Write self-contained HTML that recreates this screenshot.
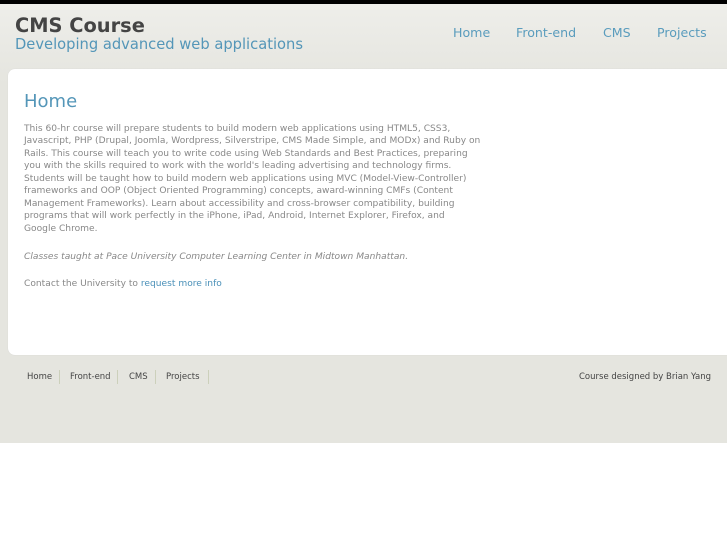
<!DOCTYPE html>
<html><head><meta charset="utf-8"><style>
html,body{margin:0;padding:0;background:#fff;}
body{width:727px;height:545px;position:relative;overflow:hidden;font-family:"DejaVu Sans","Liberation Sans",sans-serif;}
#top{position:absolute;left:0;top:0;width:727px;height:4px;background:#000;}
#bg{position:absolute;left:0;top:4px;width:727px;height:439px;background:linear-gradient(#eeeeea,#e5e5df 80px,#e5e5df);}
h1{position:absolute;left:15px;top:14px;margin:0;font-size:19.4px;font-weight:bold;color:#444;}
.sub{position:absolute;left:15px;top:36px;font-size:14.7px;color:#5496b8;}
.nav{position:absolute;top:25px;font-size:12.6px;color:#5a9cbd;}
#panel{position:absolute;left:8px;top:69px;width:730px;height:286px;background:#fff;border-radius:7px 0 0 7px;box-shadow:0 0 1px #ccc;}
h2{position:absolute;left:24px;top:91px;margin:0;font-size:18px;font-weight:normal;color:#5496b8;}
.p{position:absolute;left:24px;font-size:9.1px;line-height:12.45px;color:#888;white-space:nowrap;}
a{color:#4a90b8;text-decoration:none;}
.f{position:absolute;top:372px;font-size:8.5px;color:#444;}
.sep{position:absolute;top:370px;width:1px;height:14px;background:#ccd0bb;}
</style></head><body>
<div id="top"></div><div id="bg"></div>
<h1>CMS Course</h1>
<div class="sub">Developing advanced web applications</div>
<div class="nav" style="left:453px">Home</div>
<div class="nav" style="left:516px">Front-end</div>
<div class="nav" style="left:603px">CMS</div>
<div class="nav" style="left:657px">Projects</div>
<div id="panel"></div>
<h2>Home</h2>
<div class="p" style="top:123px">This 60-hr course will prepare students to build modern web applications using HTML5, CSS3,<br>Javascript, PHP (Drupal, Joomla, Wordpress, Silverstripe, CMS Made Simple, and MODx) and Ruby on<br>Rails. This course will teach you to write code using Web Standards and Best Practices, preparing<br>you with the skills required to work with the world's leading advertising and technology firms.<br>Students will be taught how to build modern web applications using MVC (Model-View-Controller)<br>frameworks and OOP (Object Oriented Programming) concepts, award-winning CMFs (Content<br>Management Frameworks). Learn about accessibility and cross-browser compatibility, building<br>programs that will work perfectly in the iPhone, iPad, Android, Internet Explorer, Firefox, and<br>Google Chrome.</div>
<div class="p" style="top:251px;font-style:italic">Classes taught at Pace University Computer Learning Center in Midtown Manhattan.</div>
<div class="p" style="top:278px">Contact the University to <a>request more info</a></div>
<div class="f" style="left:27px">Home</div><div class="sep" style="left:59px"></div>
<div class="f" style="left:70px">Front-end</div><div class="sep" style="left:117px"></div>
<div class="f" style="left:129px">CMS</div><div class="sep" style="left:155px"></div>
<div class="f" style="left:166px">Projects</div><div class="sep" style="left:208px"></div>
<div class="f" style="left:579px">Course designed by Brian Yang</div>
</body></html>
